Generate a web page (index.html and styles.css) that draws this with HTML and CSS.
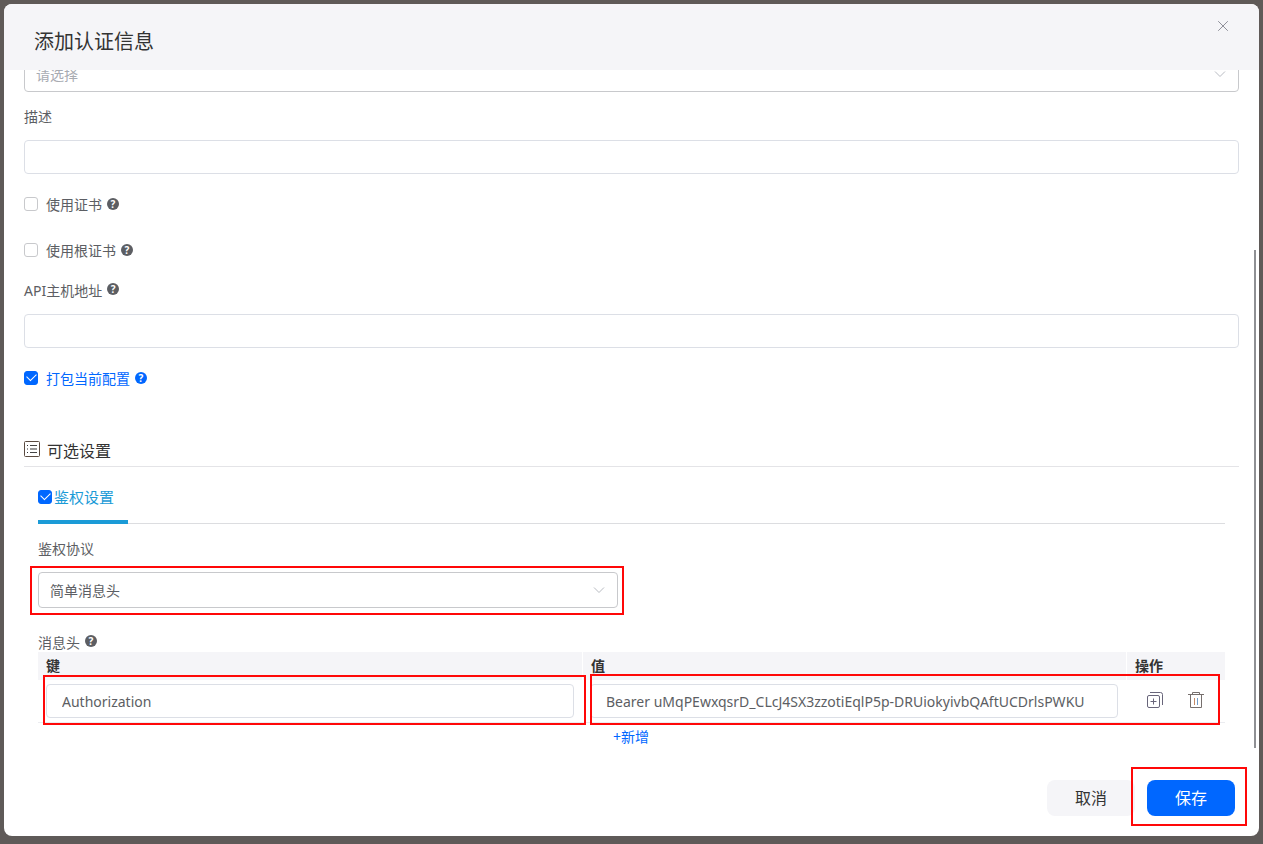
FILE: index.html
```html
<!DOCTYPE html>
<html lang="zh-CN">
<head>
<meta charset="utf-8">
<title>添加认证信息</title>
<link rel="stylesheet" href="styles.css">
</head>
<body>
<main class="dialog" role="dialog" aria-labelledby="dialog-title">
  <header class="dialog-header">
    <h1 class="dialog-title" id="dialog-title">添加认证信息</h1>
    <button class="close" type="button" aria-label="关闭">
      <svg width="12" height="12" viewBox="0 0 12 12"><path d="M1.2 1.2l9.6 9.6M10.8 1.2l-9.6 9.6" fill="none" stroke="currentColor"/></svg>
    </button>
  </header>

  <div class="dialog-body">
    <div class="scrolled">
      <div class="select-box">
        <select class="control select placeholder" aria-label="类型"><option>请选择</option></select>
        <svg class="chevron" width="12" height="8" viewBox="0 0 12 8"><path d="M1 1.5l5 5 5-5" fill="none" stroke="currentColor"/></svg>
      </div>

      <label class="field-label" for="desc">描述</label>
      <input class="control" id="desc" type="text">

      <div class="checks">
        <div class="check-row">
          <input class="check" type="checkbox" id="cert"><label class="check-label" for="cert">使用证书</label><span class="help">?</span>
        </div>
        <div class="check-row">
          <input class="check" type="checkbox" id="root"><label class="check-label" for="root">使用根证书</label><span class="help">?</span>
        </div>
      </div>

      <div class="field-head">
        <label class="field-text" for="host">API主机地址</label><span class="help">?</span>
      </div>
      <input class="control" id="host" type="text">

      <div class="checks">
        <div class="check-row active">
          <input class="check" type="checkbox" id="pack" checked><label class="check-label" for="pack">打包当前配置</label><span class="help">?</span>
        </div>
      </div>

      <h2 class="section-title">
        <svg width="16" height="16" viewBox="0 0 16 16"><rect x=".5" y=".5" width="15" height="15" rx="1" fill="none" stroke="#5a4a40"/><path d="M3 4.5h1M3 8h1M3 11.5h1" stroke="#333"/><path d="M6 4.5h7M6 11.5h7" stroke="#444"/><path d="M6 8h7" stroke="#999" stroke-width="2"/></svg>
        可选设置
      </h2>

      <div class="panel">
        <div class="tabs">
          <div class="tab">
            <input class="check" type="checkbox" id="auth" checked><label for="auth">鉴权设置</label>
          </div>
        </div>

        <label class="field-label" for="protocol">鉴权协议</label>
        <div class="select-box half marked">
          <select class="control select" id="protocol"><option>简单消息头</option></select>
          <svg class="chevron" width="12" height="8" viewBox="0 0 12 8"><path d="M1 1.5l5 5 5-5" fill="none" stroke="currentColor"/></svg>
        </div>

        <div class="table-head"><span id="headers-label">消息头</span><span class="help">?</span></div>
        <table class="headers" aria-labelledby="headers-label">
          <colgroup><col><col><col class="col-actions"></colgroup>
          <thead><tr><th>键</th><th>值</th><th>操作</th></tr></thead>
          <tbody>
            <tr class="entry">
              <td><input class="control" type="text" aria-label="键" value="Authorization"><span class="mark mark-key"></span></td>
              <td><input class="control" type="text" aria-label="值" value="Bearer uMqPEwxqsrD_CLcJ4SX3zzotiEqlP5p-DRUiokyivbQAftUCDrlsPWKU"><span class="mark mark-value"></span></td>
              <td>
                <div class="actions">
                  <button class="icon-button" type="button" aria-label="复制">
                    <svg width="16" height="16" viewBox="0 0 16 16" fill="none" stroke="#68657a"><rect x=".5" y="3.5" width="12" height="12" rx="1.5"/><path d="M3 .5h10.500a2 2 0 0 1 2 2v10.500M6.500 6.500v6M3.500 9.500h6"/></svg>
                  </button>
                  <button class="icon-button" type="button" aria-label="删除">
                    <svg width="16" height="16" viewBox="0 0 16 16" fill="none" stroke="#766f6d"><path d="M0 2.5h16M4.5 2.5v-2h7v2"/><path d="M2.5 3v12.500h11V3"/><path d="M6.500 6v7" stroke="#c58b67"/><path d="M9.500 6v7" stroke="#6f9cca"/></svg>
                  </button>
                </div>
              </td>
            </tr>
            <tr><td></td><td class="add-cell"><button class="add" type="button">+新增</button></td><td></td></tr>
          </tbody>
        </table>
      </div>
    </div>
  </div>

  <footer class="dialog-footer">
    <button class="button" type="button">取消</button>
    <span class="save marked"><button class="button primary" type="button">保存</button></span>
  </footer>
  <div class="scrollbar"></div>
</main>
</body>
</html>
```
FILE: styles.css
```css
* { box-sizing: border-box; }

body {
  margin: 0;
  min-height: 100vh;
  display: flex;
  padding: 4px 4px 8px;
  background: #5f5a58;
  color: #5c5e63;
  font: 14px/24px "Noto Sans", "Noto Sans CJK SC", sans-serif;
}

button, input, select { font: inherit; color: inherit; }

button {
  padding: 0;
  border: 0;
  background: none;
  cursor: pointer;
}

svg { display: block; flex: none; }

.dialog {
  position: relative;
  flex: 1;
  min-width: 0;
  display: flex;
  flex-direction: column;
  overflow: hidden;
  border-radius: 8px;
  background: #fff;
}

.dialog-header {
  display: flex;
  align-items: flex-start;
  justify-content: space-between;
  padding: 16px 30px 14px;
  background: #f5f5f8;
}

.dialog-title {
  margin: 8px 0 0;
  color: #333;
  font-size: 20px;
  font-weight: 400;
  line-height: 28px;
}

.close { color: #8f909a; }

.dialog-body {
  flex: 1;
  overflow: hidden;
  padding: 0 20px;
}

.scrolled { margin-top: -14px; }

.control {
  display: block;
  width: 100%;
  height: 34px;
  padding: 0 15px;
  border: 1px solid #dcdfe6;
  border-radius: 4px;
  background: #fff;
  outline: 0;
}

.select-box { position: relative; }

.select {
  height: 36px;
  padding: 1px 11px 0;
  border-color: #c8c9cc;
  appearance: none;
}

.placeholder { color: #a8abb2; }

.chevron {
  position: absolute;
  top: 14px;
  right: 13px;
  color: #b8bbc2;
  pointer-events: none;
}

.half { width: 580px; max-width: 100%; }

.field-label { display: block; margin: 13px 0 11px; }

.field-head {
  display: flex;
  gap: 5px;
  margin: 5px 0 11px;
}

.checks { padding-top: 8px; }

.check-row {
  display: flex;
  align-items: center;
  height: 46px;
}

.check {
  position: relative;
  flex: none;
  width: 14px;
  height: 14px;
  margin: 0;
  border: 1px solid #c8c9cc;
  border-radius: 3px;
  background: #fff;
  appearance: none;
}

.check-row .check { margin-bottom: 2px; }

.check:checked { border-color: #0067ff; background: #0067ff; }

.check:checked::after {
  content: "";
  position: absolute;
  left: 2px;
  top: 2px;
  width: 8px;
  height: 5px;
  border: solid #fff;
  border-width: 0 0 1px 1px;
  transform: translateY(-1px) rotate(-45deg);
}

.check-label { margin: 0 5px 0 8px; }

.help {
  display: grid;
  place-items: center;
  width: 12px;
  height: 12px;
  margin: 4px 0 7px;
  border-radius: 50%;
  background: #5c5e63;
  color: #fff;
  font-size: 10px;
  font-weight: 700;
  line-height: 12px;
}

.active { color: #0067ff; }
.active .help { background: #0067ff; }

.section-title {
  display: flex;
  gap: 7px;
  margin: 32px 0 0;
  padding: 5px 0 3px;
  border-bottom: 1px solid #e4e4e7;
  color: #333;
  font-size: 16px;
  font-weight: 400;
}

.section-title svg { margin-top: 2px; }

.panel { padding: 0 14px; }

.tabs {
  display: flex;
  box-shadow: inset 0 -1px #dcdde0;
}

.tab {
  display: flex;
  align-items: center;
  gap: 2px;
  width: 90px;
  padding: 18px 0 11px;
  border-bottom: 4px solid #1b9bd7;
  color: #1b9bd7;
  font-size: 15px;
}

.table-head {
  display: flex;
  gap: 5px;
  height: 20px;
  margin-top: 24px;
  line-height: 22px;
}

.table-head .help { margin: 3px 0; }

.headers {
  width: 100%;
  border-spacing: 0;
  border-collapse: separate;
  table-layout: fixed;
}

.col-actions { width: 99px; }

.headers th {
  height: 28px;
  padding: 0 8px;
  border-left: 1px solid #fff;
  background: #f5f5f8;
  color: #333;
  font-weight: 700;
  line-height: 28px;
  text-align: left;
}

.headers th:first-child { border-left: 0; }

.headers td { padding: 0; }

.headers .entry td {
  position: relative;
  padding: 4px 8px;
  border-bottom: 1px solid #ebecf0;
}

.actions {
  display: flex;
  align-items: center;
  gap: 25px;
  height: 34px;
  padding: 0 0 2px 13px;
}

.headers .add-cell { padding: 2px 31px; }

.add { color: #0067ff; display: block; }

.dialog-footer {
  display: flex;
  justify-content: flex-end;
  gap: 12px;
  padding: 20px 24px;
}

.button {
  display: block;
  width: 88px;
  height: 36px;
  border-radius: 8px;
  background: #f5f5f8;
  color: #333;
  font-size: 16px;
}

.primary { background: #0067ff; color: #fff; }

.marked { position: relative; }

.marked::after, .mark {
  content: "";
  position: absolute;
  z-index: 1;
  inset: -6px -6px -7px -8px;
  border: 2px solid #ff0808;
  pointer-events: none;
}

.save::after { inset: -13px -12px -10px -16px; }
.mark-key { inset: -5px -4px -3px 5px; }
.mark-value { inset: -6px -94px -3px 8px; }

.scrollbar {
  position: absolute;
  top: 246px;
  right: 3px;
  bottom: 88px;
  width: 2px;
  background: #8f9094;
}
```
